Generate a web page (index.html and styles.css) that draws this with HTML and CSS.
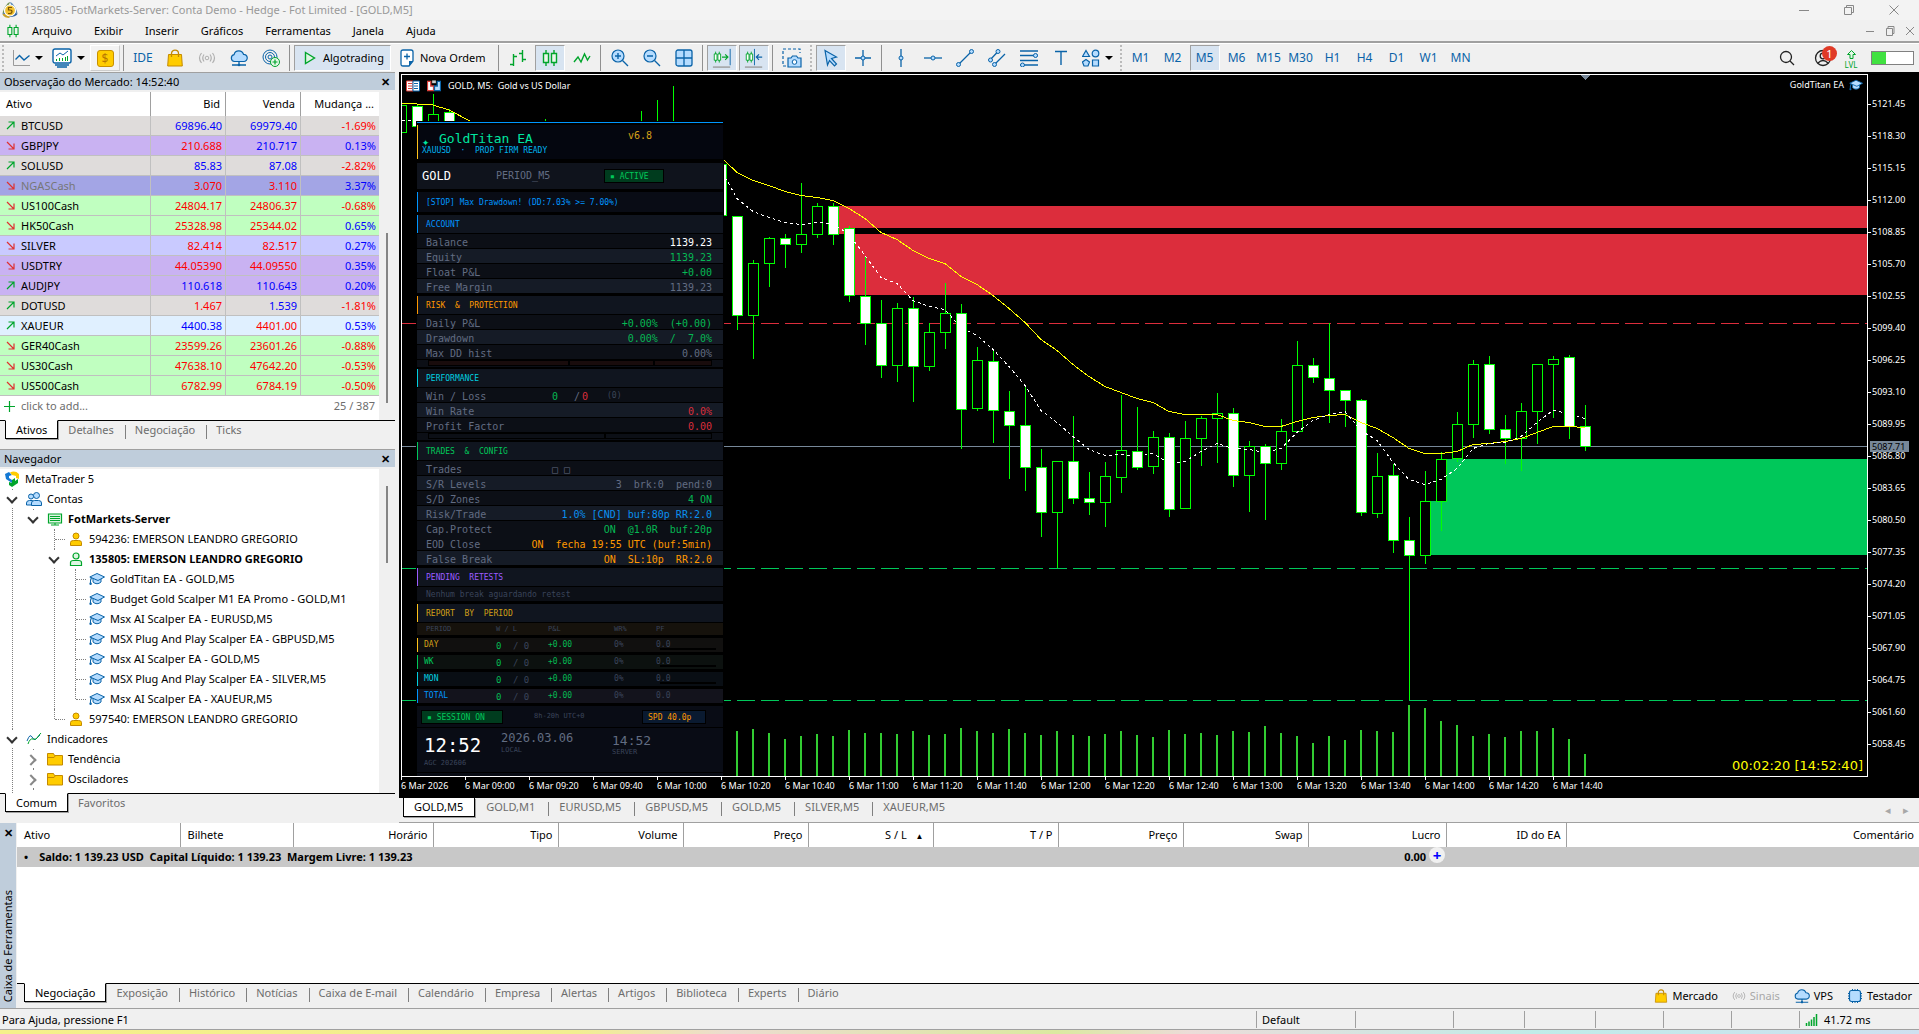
FILE: index.html
```html
<!DOCTYPE html>
<html lang="pt-BR">

<head>
    <meta charset="UTF-8">
    <meta name="viewport" content="width=device-width, initial-scale=1.0">
    <title>135805 - FotMarkets-Server</title>
    <link rel="stylesheet" href="styles.css">
</head>

<body>
    <svg class="sprite" aria-hidden="true">
        <symbol id="i-mt5" viewBox="0 0 18 18">
            <path d="M9 1C6 2 2 8 1.500 13l4-3z" fill="#6d8f55" />
            <path d="M9 1c3 1 7 7 7.500 12l-4-3z" fill="#5d8bb5" />
            <path d="M1.500 13c2 4 13 4 15 0l-3-2H4.500z" fill="#2d5f9c" />
            <path d="M1.500 13c1 3 4 4 7 4V13z" fill="#c9a227" />
            <circle cx="9" cy="9.500" r="5.500" fill="#f2c230" stroke="#fff" stroke-width="1.200" />
            <path d="M11 6.500H7.500v2.500h1.500q2 0 2 1.700T9 12.500H7" fill="none" stroke="#7a5200" stroke-width="1.200" />
        </symbol>
        <symbol id="i-candles" viewBox="0 0 18 18">
            <path d="M5 1v16M13 1v16" stroke="#00a52b" stroke-width="1.400" />
            <path d="M2.500 4.500h5v9h-5zM10.500 4.500h5v9h-5z" fill="#eaf6ec" stroke="#00a52b" stroke-width="1.400" />
        </symbol>
        <symbol id="i-line" viewBox="0 0 18 18">
            <path d="M1.500 1v15.500H18" fill="none" stroke="#9a9a9a" />
            <path d="M3.500 10.500l4-4 4.500 4.500 5.500-4.500" fill="none" stroke="#0a63a8" stroke-width="1.400" />
        </symbol>
        <symbol id="i-indic" viewBox="0 0 20 20">
            <rect x="1" y="1" width="18" height="14" rx="2" fill="#fff" stroke="#0a63a8" stroke-width="1.400" />
            <path d="M4 8l4-3 3 2 5-4" fill="none" stroke="#0a63a8" />
            <path d="M4.500 13v-2M7.500 13v-3M10.500 13v-3M13.500 13v-4M15.500 13V8" stroke="#00a52b" />
            <path d="M3 17h14M5 19h10" stroke="#0a63a8" stroke-width="1.400" />
        </symbol>
        <symbol id="i-bag" viewBox="0 0 16 18">
            <path d="M1.500 5.500h13l.8 11.500H.7z" fill="#fc0" stroke="#c48a00" />
            <path d="M4.500 8V4.500c0-4.500 7-4.500 7 0V8" fill="none" stroke="#c48a00" stroke-width="1.300" />
        </symbol>
        <symbol id="i-signal" viewBox="0 0 18 18">
            <circle cx="9" cy="9" r="1.800" fill="none" stroke="#b0b0b0" />
            <path d="M6 5.500q-2.500 3.500 0 7M12 5.500q2.500 3.500 0 7M3.500 4q-4 5 0 10M14.500 4q4 5 0 10" fill="none" stroke="#b0b0b0" stroke-width="1.200" />
        </symbol>
        <symbol id="i-cloud" viewBox="0 0 18 18">
            <path d="M4.500 12.500a3.500 3.500 0 0 1-.4-6.900 4.900 4.900 0 0 1 9.400-.3 3.600 3.600 0 0 1 .3 7.200z" fill="#b5dcff" stroke="#0a63a8" stroke-width="1.200" />
            <path d="M9 12.500V16M2 16h14" stroke="#0a63a8" stroke-width="1.300" />
            <circle cx="9" cy="16" r="1.300" fill="#0a63a8" />
        </symbol>
        <symbol id="i-radar" viewBox="0 0 18 18">
            <circle cx="8" cy="8" r="7" fill="none" stroke="#0a63a8" />
            <circle cx="8" cy="8" r="4.500" fill="none" stroke="#0a63a8" />
            <circle cx="8" cy="8" r="2" fill="none" stroke="#0a63a8" />
            <circle cx="13" cy="13" r="4.500" fill="#e6f7e8" stroke="#00a52b" />
            <path d="M13 10.500v5M10.500 13h5" stroke="#00a52b" stroke-width="1.200" />
        </symbol>
        <symbol id="i-play" viewBox="0 0 12 14">
            <path d="M1.500 1.500l9 5.500-9 5.500z" fill="#dff5e3" stroke="#00a52b" stroke-width="1.400" />
        </symbol>
        <symbol id="i-order" viewBox="0 0 14 18">
            <path d="M3 1h8q2 0 2 2v9l-4 5H3q-2 0-2-2V3q0-2 2-2z" fill="#fff" stroke="#0a63a8" stroke-width="1.300" />
            <path d="M13 12H9v5z" fill="#0a63a8" />
            <path d="M7 4.500v6M4 7.500h6" stroke="#0a63a8" stroke-width="1.300" />
        </symbol>
        <symbol id="i-bars" viewBox="0 0 18 18">
            <path d="M4.500 5v12M1 15.500h3.500M4.500 7.500H8M13.500 1v12M10 4.500h3.500M13.500 10.500H17" fill="none" stroke="#00a52b" stroke-width="1.400" />
        </symbol>
        <symbol id="i-zig" viewBox="0 0 18 18">
            <path d="M1 13l4-5 3 5 3.500-8 3 6L17 7" fill="none" stroke="#00a52b" stroke-width="1.400" />
        </symbol>
        <symbol id="i-zoomin" viewBox="0 0 18 18">
            <circle cx="7" cy="7" r="6" fill="#b5dcff" stroke="#0a63a8" stroke-width="1.200" />
            <path d="M11.500 11.500L17 17M4 7h6M7 4v6" stroke="#0a63a8" stroke-width="1.400" />
        </symbol>
        <symbol id="i-zoomout" viewBox="0 0 18 18">
            <circle cx="7" cy="7" r="6" fill="#b5dcff" stroke="#0a63a8" stroke-width="1.200" />
            <path d="M11.500 11.500L17 17M4 7h6" stroke="#0a63a8" stroke-width="1.400" />
        </symbol>
        <symbol id="i-grid" viewBox="0 0 18 18">
            <rect x="1" y="1" width="16" height="16" rx="2" fill="#b5dcff" stroke="#0a63a8" stroke-width="1.300" />
            <path d="M9 1v16M1 9h16" stroke="#0a63a8" stroke-width="1.300" />
        </symbol>
        <symbol id="i-scroll" viewBox="0 0 20 22">
            <path d="M3 4v12M7 4v12" stroke="#00a52b" />
            <path d="M1.500 6.500h3v7h-3zM5.500 6.500h3v7h-3z" fill="#fff" stroke="#00a52b" />
            <path d="M10 10h6M13.500 7l3 3-3 3" fill="none" stroke="#00a52b" stroke-width="1.300" />
            <path d="M19 1v18" stroke="#0a63a8" />
            <path d="M0 21h19" stroke="#9a9a9a" stroke-width="1.500" />
        </symbol>
        <symbol id="i-shift" viewBox="0 0 20 22">
            <path d="M3 4v12M7 4v12" stroke="#00a52b" />
            <path d="M1.500 6.500h3v7h-3zM5.500 6.500h3v7h-3z" fill="#fff" stroke="#00a52b" />
            <path d="M19 10h-6M15.500 7l-3 3 3 3" fill="none" stroke="#0a63a8" stroke-width="1.300" />
            <path d="M10.500 1v18" stroke="#0a63a8" />
            <path d="M0 21h19" stroke="#9a9a9a" stroke-width="1.500" />
        </symbol>
        <symbol id="i-camera" viewBox="0 0 20 20">
            <path d="M4 18H1V1h17v4" fill="none" stroke="#0a63a8" stroke-width="1.200" stroke-dasharray="3 2" />
            <path d="M6 10h3l1.500-2h4L16 10h3v9H6z" fill="#b5dcff" stroke="#0a63a8" stroke-width="1.200" />
            <circle cx="12.500" cy="14" r="2.300" fill="#fff" stroke="#0a63a8" />
        </symbol>
        <symbol id="i-cursor" viewBox="0 0 18 18">
            <path d="M3 1.500l11.500 6.500-5 1.500 5 5.500-2 2-5-5.500L5.500 16z" fill="#b5dcff" stroke="#0a63a8" stroke-width="1.200" />
        </symbol>
        <symbol id="i-cross" viewBox="0 0 18 18">
            <path d="M9 1v16M1 9h16" stroke="#0a63a8" stroke-width="1.300" />
            <circle cx="9" cy="9" r="2" fill="#b5dcff" stroke="#0a63a8" />
        </symbol>
        <symbol id="i-vline" viewBox="0 0 18 18">
            <path d="M9 0v18" stroke="#0a63a8" stroke-width="1.300" />
            <circle cx="9" cy="9" r="2" fill="#b5dcff" stroke="#0a63a8" />
        </symbol>
        <symbol id="i-hline" viewBox="0 0 18 18">
            <path d="M0 9h18" stroke="#0a63a8" stroke-width="1.300" />
            <circle cx="9" cy="9" r="2" fill="#b5dcff" stroke="#0a63a8" />
        </symbol>
        <symbol id="i-trend" viewBox="0 0 18 18">
            <path d="M3 15L15 3" stroke="#0a63a8" stroke-width="1.300" />
            <circle cx="2.500" cy="15.500" r="2" fill="#b5dcff" stroke="#0a63a8" />
            <circle cx="15.500" cy="2.500" r="2" fill="#b5dcff" stroke="#0a63a8" />
        </symbol>
        <symbol id="i-channel" viewBox="0 0 18 18">
            <path d="M2 11l8-8.500M6 16L17 5" stroke="#0a63a8" stroke-width="1.300" />
            <circle cx="2.500" cy="11" r="2" fill="#b5dcff" stroke="#0a63a8" />
            <circle cx="10" cy="2.500" r="2" fill="#b5dcff" stroke="#0a63a8" />
            <circle cx="6.500" cy="15.500" r="2" fill="#b5dcff" stroke="#0a63a8" />
        </symbol>
        <symbol id="i-fibo" viewBox="0 0 18 18">
            <path d="M0 2h18M0 6.500h18M0 11.500h18M0 16h18" stroke="#0a63a8" stroke-width="1.300" />
            <circle cx="15.500" cy="6.500" r="2" fill="#b5dcff" stroke="#0a63a8" />
            <circle cx="2.500" cy="16" r="2" fill="#b5dcff" stroke="#0a63a8" />
        </symbol>
        <symbol id="i-text" viewBox="0 0 18 18">
            <path d="M3 2.500h12M9 2.500V16" stroke="#0a63a8" stroke-width="1.400" />
        </symbol>
        <symbol id="i-shapes" viewBox="0 0 18 18">
            <g fill="#b5dcff" stroke="#0a63a8" stroke-width="1.200">
                <path d="M4 1.500l3.500 6h-7z" />
                <circle cx="13.500" cy="4.500" r="3.300" />
                <path d="M4 10.500l3.500 2.500-1.500 4H2l-1.500-4z" />
                <path d="M10.500 11h6v6h-6z" />
            </g>
        </symbol>
        <symbol id="i-search" viewBox="0 0 18 18">
            <circle cx="8" cy="8" r="5.500" fill="none" stroke="#222" stroke-width="1.300" />
            <path d="M12 12l4 4" stroke="#222" stroke-width="1.300" />
        </symbol>
        <symbol id="i-user" viewBox="0 0 18 18">
            <circle cx="9" cy="9" r="7.500" fill="none" stroke="#222" stroke-width="1.300" />
            <circle cx="9" cy="7" r="2.800" fill="none" stroke="#222" stroke-width="1.300" />
            <path d="M4 14q5-5 10 0" fill="none" stroke="#222" stroke-width="1.300" />
        </symbol>
        <symbol id="i-level" viewBox="0 0 11 10">
            <path d="M5.500 1l4 4H7v4H4V5H1.500z" fill="#e6f7e8" stroke="#00a52b" />
        </symbol>
        <symbol id="i-up" viewBox="0 0 9 9">
            <path d="M1 8l7-7M2.500 1H8v5.500" fill="none" stroke="#00a52b" stroke-width="1.200" />
        </symbol>
        <symbol id="i-down" viewBox="0 0 9 9">
            <path d="M1 1l7 7M8 2.500V8H2.500" fill="none" stroke="#e03030" stroke-width="1.200" />
        </symbol>
        <symbol id="i-plus" viewBox="0 0 11 11">
            <path d="M5.500 0v11M0 5.500h11" stroke="#00a52b" stroke-width="1.200" />
        </symbol>
        <symbol id="i-meta" viewBox="0 0 16 16">
            <path d="M1 3l4-2 3 3-3 1v2l3 2v3L2 8z" fill="#1479d4" />
            <path d="M6 1.500q5-2.500 9 1.500v5l-3-1V5L8 4z" fill="#fc0" />
            <path d="M8 9l3-2v3l3-2v4l-6 4-3-2v-3l3 1z" fill="#00a52b" />
        </symbol>
        <symbol id="i-users" viewBox="0 0 16 16">
            <g fill="#b5dcff" stroke="#0a63a8">
                <circle cx="5" cy="5.500" r="2.500" />
                <path d="M.5 14v-2q0-2.500 3-2.500h3V14z" />
                <circle cx="10.500" cy="4.500" r="3" />
                <path d="M5.500 14.500V12q0-2.500 3-2.500h4q3 0 3 2.500v2.500z" />
            </g>
        </symbol>
        <symbol id="i-server" viewBox="0 0 16 16">
            <path d="M1.500 3h13v9h-13z" fill="#dff5e3" stroke="#00a52b" stroke-width="1.200" />
            <path d="M3 5.500h10M3 7.500h10M3 9.500h10M8 12v2M4 14h8" stroke="#00a52b" />
        </symbol>
        <symbol id="i-account" viewBox="0 0 14 16">
            <g fill="#fc0" stroke="#c48a00">
                <circle cx="7" cy="5" r="3" />
                <path d="M1.500 14.500v-3q0-2 3-2h5q3 0 3 2v3z" />
            </g>
        </symbol>
        <symbol id="i-active" viewBox="0 0 14 16">
            <g fill="#dff5e3" stroke="#00a52b" stroke-width="1.200">
                <circle cx="7" cy="5" r="3" />
                <path d="M1.500 14.500v-3q0-2 3-2h5q3 0 3 2v3z" />
            </g>
        </symbol>
        <symbol id="i-expert" viewBox="0 0 16 14">
            <path d="M4 6v4q4 3.500 8 0V6" fill="#b5dcff" stroke="#0a63a8" />
            <path d="M.8 5L8 1.500 15.500 5 9 8.500z" fill="#b5dcff" stroke="#0a63a8" />
            <path d="M2.500 5.500q-1.500 3-1 6" fill="none" stroke="#0a63a8" stroke-width="1.200" />
            <circle cx="1.600" cy="11.800" r="1.200" fill="#0a63a8" />
        </symbol>
        <symbol id="i-waves" viewBox="0 0 16 16">
            <path d="M1 10q3-8 5-4t4 2 4-4" fill="none" stroke="#0a63a8" />
            <path d="M2 13q2-6 5-5t4-1 4-5" fill="none" stroke="#00a52b" />
        </symbol>
        <symbol id="i-folder" viewBox="0 0 16 14">
            <path d="M.5 1.500h6l1 2h8V13H.5z" fill="#fc0" stroke="#c48a00" />
            <path d="M1 5.500h6l1.500-2" fill="none" stroke="#c48a00" />
        </symbol>
        <symbol id="i-chip" viewBox="0 0 16 16">
            <path d="M5.500 1v14M8 1v14M10.500 1v14M1 5.500h14M1 8h14M1 10.500h14" stroke="#0a63a8" />
            <rect x="2.500" y="2.500" width="11" height="11" rx="2" fill="#b5dcff" stroke="#0a63a8" stroke-width="1.200" />
        </symbol>
        <symbol id="i-net" viewBox="0 0 14 12">
            <path d="M1.500 12V9M4 12V7.500M6.500 12V5.500M9 12V3M11.500 12V0" stroke="#00a52b" stroke-width="1.500" />
        </symbol>
        <symbol id="i-book" viewBox="0 0 14 12">
            <path d="M.5 1h6.500v10H.5z" fill="#fff" stroke="#d9403a" />
            <path d="M7 1h6.500v10H7z" fill="#fff" stroke="#0a63a8" />
            <path d="M2 3.500h4M2 6h4M2 8.500h4" stroke="#d9403a" />
            <path d="M8 3.500h4M8 6h4M8 8.500h4" stroke="#0a63a8" />
        </symbol>
        <symbol id="i-trade" viewBox="0 0 15 12">
            <path d="M.5 1H4v5h3v5H.5z" fill="#fff" stroke="#d9403a" stroke-width="1.400" />
            <path d="M14.500 1H11v5H8v5h6.500z" fill="#b5dcff" stroke="#0a63a8" stroke-width="1.400" />
            <path d="M5.500 0h4v3h-4z" fill="#ccc" />
        </symbol>
    </svg>

    <header class="titlebar">
        <svg class="i18"><use href="#i-mt5" /></svg>
        <h1>135805 - FotMarkets-Server: Conta Demo - Hedge - Fot Limited - [GOLD,M5]</h1>
        <div class="window-buttons">
            <button aria-label="Minimizar"><svg viewBox="0 0 10 10"><path d="M0 5.500h10" /></svg></button>
            <button aria-label="Restaurar"><svg viewBox="0 0 10 10"><path d="M.5 2.500h7v7h-7zM2.500 2V.5h7v7H8" /></svg></button>
            <button aria-label="Fechar"><svg viewBox="0 0 10 10"><path d="M.5.500l9 9M9.500.5l-9 9" /></svg></button>
        </div>
    </header>

    <nav class="menubar">
        <svg class="i14"><use href="#i-candles" /></svg>
        <button>Arquivo</button>
        <button>Exibir</button>
        <button>Inserir</button>
        <button>Gráficos</button>
        <button>Ferramentas</button>
        <button>Janela</button>
        <button>Ajuda</button>
        <div class="window-buttons small">
            <button aria-label="Minimizar gráfico"><svg viewBox="0 0 10 10"><path d="M1 5.500h8" /></svg></button>
            <button aria-label="Restaurar gráfico"><svg viewBox="0 0 10 10"><path d="M1.500 2.500h6v7h-6zM3 2V.5h6v7H8" /></svg></button>
            <button aria-label="Fechar gráfico"><svg viewBox="0 0 10 10"><path d="M1 1l8 8M9 1L1 9" /></svg></button>
        </div>
    </nav>

    <div class="toolbar">
        <i class="grip"></i>
        <button class="tool drop" aria-label="Novo gráfico"><svg class="i18"><use href="#i-line" /></svg></button>
        <button class="tool drop" aria-label="Indicadores"><svg class="i20"><use href="#i-indic" /></svg></button>
        <button class="tool raised"><span class="dollar">$</span></button>
        <i class="sep"></i>
        <button class="tool word">IDE</button>
        <button class="tool" aria-label="Mercado"><svg class="i18"><use href="#i-bag" /></svg></button>
        <button class="tool" aria-label="Sinais"><svg class="i18"><use href="#i-signal" /></svg></button>
        <button class="tool" aria-label="VPS"><svg class="i18"><use href="#i-cloud" /></svg></button>
        <button class="tool" aria-label="Rede"><svg class="i18"><use href="#i-radar" /></svg></button>
        <i class="sep"></i>
        <button class="tool wide on"><svg class="i14"><use href="#i-play" /></svg>Algotrading</button>
        <button class="tool wide order"><svg class="i18"><use href="#i-order" /></svg>Nova Ordem</button>
        <i class="sep"></i>
        <button class="tool" aria-label="Barras"><svg class="i18"><use href="#i-bars" /></svg></button>
        <button class="tool on" aria-label="Candles"><svg class="i18"><use href="#i-candles" /></svg></button>
        <button class="tool" aria-label="Linha"><svg class="i18"><use href="#i-zig" /></svg></button>
        <i class="sep"></i>
        <button class="tool" aria-label="Ampliar"><svg class="i18"><use href="#i-zoomin" /></svg></button>
        <button class="tool" aria-label="Reduzir"><svg class="i18"><use href="#i-zoomout" /></svg></button>
        <button class="tool" aria-label="Lado a lado"><svg class="i18"><use href="#i-grid" /></svg></button>
        <i class="sep"></i>
        <button class="tool on" aria-label="Rolagem automática"><svg class="i20"><use href="#i-scroll" /></svg></button>
        <button class="tool on" aria-label="Deslocamento"><svg class="i20"><use href="#i-shift" /></svg></button>
        <i class="sep"></i>
        <button class="tool" aria-label="Captura"><svg class="i20"><use href="#i-camera" /></svg></button>
        <i class="grip"></i>
        <button class="tool on" aria-label="Cursor"><svg class="i18"><use href="#i-cursor" /></svg></button>
        <button class="tool" aria-label="Mira"><svg class="i18"><use href="#i-cross" /></svg></button>
        <i class="sep"></i>
        <button class="tool" aria-label="Linha vertical"><svg class="i18"><use href="#i-vline" /></svg></button>
        <button class="tool" aria-label="Linha horizontal"><svg class="i18"><use href="#i-hline" /></svg></button>
        <button class="tool" aria-label="Tendência"><svg class="i18"><use href="#i-trend" /></svg></button>
        <button class="tool" aria-label="Canal"><svg class="i18"><use href="#i-channel" /></svg></button>
        <button class="tool" aria-label="Fibonacci"><svg class="i18"><use href="#i-fibo" /></svg></button>
        <button class="tool" aria-label="Texto"><svg class="i18"><use href="#i-text" /></svg></button>
        <button class="tool drop" aria-label="Objetos"><svg class="i18"><use href="#i-shapes" /></svg></button>
        <i class="grip"></i>
        <button class="tool word">M1</button>
        <button class="tool word">M2</button>
        <button class="tool word on">M5</button>
        <button class="tool word">M6</button>
        <button class="tool word">M15</button>
        <button class="tool word">M30</button>
        <button class="tool word">H1</button>
        <button class="tool word">H4</button>
        <button class="tool word">D1</button>
        <button class="tool word">W1</button>
        <button class="tool word">MN</button>
        <div class="toolbar-end">
            <button class="tool" aria-label="Pesquisar"><svg class="i18"><use href="#i-search" /></svg></button>
            <button class="tool user" aria-label="Perfil"><svg class="i18"><use href="#i-user" /></svg><span class="badge">1</span></button>
            <div class="level"><svg class="i11"><use href="#i-level" /></svg>LVL</div>
            <div class="battery"></div>
        </div>
    </div>

    <main class="workspace">
        <aside class="sidebar">
            <section class="dock">
                <div class="dock-title">
                    <h2>Observação do Mercado: 14:52:40</h2>
                    <button aria-label="Fechar">✕</button>
                </div>
                <div class="dock-body">
                    <table class="market">
                        <thead>
                            <tr><th>Ativo</th><th>Bid</th><th>Venda</th><th>Mudança ...</th></tr>
                        </thead>
                        <tbody id="market-rows"></tbody>
                    </table>
                    <div class="add-row">
                        <svg class="i11"><use href="#i-plus" /></svg>
                        <span>click to add...</span>
                        <span class="count">25 / 387</span>
                    </div>
                    <i class="scroll market-scroll"></i>
                </div>
                <div class="tabs">
                    <button class="tab active">Ativos</button>
                    <button class="tab">Detalhes</button>
                    <button class="tab">Negociação</button>
                    <button class="tab">Ticks</button>
                </div>
            </section>

            <section class="dock navigator">
                <div class="dock-title">
                    <h2>Navegador</h2>
                    <button aria-label="Fechar">✕</button>
                </div>
                <div class="dock-body">
                    <div class="node root"><svg class="i16"><use href="#i-meta" /></svg>MetaTrader 5</div>
                    <ul class="tree">
                        <li>
                            <div class="node open"><svg class="i16"><use href="#i-users" /></svg>Contas</div>
                            <ul>
                                <li>
                                    <div class="node open bold"><svg class="i16"><use href="#i-server" /></svg>FotMarkets-Server</div>
                                    <ul>
                                        <li><div class="node"><svg class="i16"><use href="#i-account" /></svg>594236: EMERSON LEANDRO GREGORIO</div></li>
                                        <li>
                                            <div class="node open bold"><svg class="i16"><use href="#i-active" /></svg>135805: EMERSON LEANDRO GREGORIO</div>
                                            <ul>
                                                <li><div class="node"><svg class="i16"><use href="#i-expert" /></svg>GoldTitan EA - GOLD,M5</div></li>
                                                <li><div class="node"><svg class="i16"><use href="#i-expert" /></svg>Budget Gold Scalper M1 EA Promo - GOLD,M1</div></li>
                                                <li><div class="node"><svg class="i16"><use href="#i-expert" /></svg>Msx AI Scalper EA - EURUSD,M5</div></li>
                                                <li><div class="node"><svg class="i16"><use href="#i-expert" /></svg>MSX Plug And Play Scalper EA - GBPUSD,M5</div></li>
                                                <li><div class="node"><svg class="i16"><use href="#i-expert" /></svg>Msx AI Scalper EA - GOLD,M5</div></li>
                                                <li><div class="node"><svg class="i16"><use href="#i-expert" /></svg>MSX Plug And Play Scalper EA - SILVER,M5</div></li>
                                                <li><div class="node"><svg class="i16"><use href="#i-expert" /></svg>Msx AI Scalper EA - XAUEUR,M5</div></li>
                                            </ul>
                                        </li>
                                        <li><div class="node"><svg class="i16"><use href="#i-account" /></svg>597540: EMERSON LEANDRO GREGORIO</div></li>
                                    </ul>
                                </li>
                            </ul>
                        </li>
                        <li>
                            <div class="node open"><svg class="i16"><use href="#i-waves" /></svg>Indicadores</div>
                            <ul>
                                <li><div class="node closed"><svg class="i16"><use href="#i-folder" /></svg>Tendência</div></li>
                                <li><div class="node closed"><svg class="i16"><use href="#i-folder" /></svg>Osciladores</div></li>
                                <li><div class="node closed"><svg class="i16"><use href="#i-folder" /></svg></div></li>
                            </ul>
                        </li>
                        <li></li>
                    </ul>
                    <i class="scroll nav-scroll"></i>
                </div>
                <div class="tabs">
                    <button class="tab active">Comum</button>
                    <button class="tab">Favoritos</button>
                </div>
            </section>
        </aside>

        <section class="chart-area">
            <div class="chart">
                <div class="plot">
                    <svg id="plot" class="plot-svg"></svg>
                    <div class="plot-title">
                        <svg class="i14"><use href="#i-book" /></svg>
                        <svg class="i14"><use href="#i-trade" /></svg>
                        <span>GOLD, M5:&nbsp; Gold vs US Dollar</span>
                    </div>
                    <div class="plot-ea">GoldTitan EA <svg class="i14"><use href="#i-expert" /></svg></div>
                    <div class="plot-timer">00:02:20 [14:52:40]</div>

                    <div class="ea">
                        <div class="ea-head c-gold">
                            <div class="ea-name"><span>✦</span><b>GoldTitan EA</b><em>v6.8</em></div>
                            <div class="ea-sub">XAUUSD&nbsp; ·&nbsp; PROP FIRM READY</div>
                        </div>
                        <div class="ea-symbol"><b>GOLD</b><span>PERIOD_M5</span><em class="pill">▪ ACTIVE</em></div>
                        <div class="ea-stop c-blue">[STOP] Max Drawdown! (DD:7.03% &gt;= 7.00%)</div>

                        <h3 class="c-blue">ACCOUNT</h3>
                        <div class="ea-row"><span>Balance</span><b class="white">1139.23</b></div>
                        <div class="ea-row alt"><span>Equity</span><b class="green">1139.23</b></div>
                        <div class="ea-row"><span>Float P&amp;L</span><b class="green">+0.00</b></div>
                        <div class="ea-row alt"><span>Free Margin</span><b>1139.23</b></div>

                        <h3 class="c-orange">RISK&nbsp; &amp;&nbsp; PROTECTION</h3>
                        <div class="ea-row"><span>Daily P&amp;L</span><b class="green">+0.00%&nbsp; (+0.00)</b></div>
                        <div class="ea-row alt"><span>Drawdown</span><b class="green">0.00%&nbsp; /&nbsp; 7.0%</b></div>
                        <div class="ea-row"><span>Max DD hist</span><b>0.00%</b></div>
                        <div class="ea-gauge red"><i></i><i></i><i></i></div>

                        <h3 class="c-cyan">PERFORMANCE</h3>
                        <div class="ea-row winloss"><span>Win / Loss</span><b class="green">0</b><i>/</i><b class="red">0</b><small>(0)</small></div>
                        <div class="ea-row alt"><span>Win Rate</span><b class="red">0.0%</b></div>
                        <div class="ea-row"><span>Profit Factor</span><b class="red">0.00</b></div>
                        <div class="ea-gauge"><i></i><i></i></div>

                        <h3 class="c-green">TRADES&nbsp; &amp;&nbsp; CONFIG</h3>
                        <div class="ea-row slots"><span>Trades</span><b>□ □</b></div>
                        <div class="ea-row alt"><span>S/R Levels</span><b>3&nbsp; brk:0&nbsp; pend:0</b></div>
                        <div class="ea-row"><span>S/D Zones</span><b class="green">4 ON</b></div>
                        <div class="ea-row alt"><span>Risk/Trade</span><b class="blue">1.0% [CND] buf:80p RR:2.0</b></div>
                        <div class="ea-row open-end"><span>Cap.Protect</span><b class="green">ON&nbsp; @1.0R&nbsp; buf:20p</b></div>
                        <div class="ea-row"><span>EOD Close</span><b class="orange">ON&nbsp; fecha 19:55 UTC (buf:5min)</b></div>
                        <div class="ea-row alt"><span>False Break</span><b class="orange">ON&nbsp; SL:10p&nbsp; RR:2.0</b></div>

                        <h3 class="c-purple">PENDING&nbsp; RETESTS</h3>
                        <div class="ea-row note">Nenhum break aguardando retest</div>

                        <h3 class="c-gold">REPORT&nbsp; BY&nbsp; PERIOD</h3>
                        <div class="ea-cols"><span>PERIOD</span><span>W / L</span><span>P&amp;L</span><span>WR%</span><span>PF</span></div>
                        <div class="ea-period c-gold"><span>DAY</span><b>0</b><i>/ 0</i><b>+0.00</b><span>0%</span><span class="pf">0.0</span></div>
                        <div class="ea-period c-green"><span>WK</span><b>0</b><i>/ 0</i><b>+0.00</b><span>0%</span><span class="pf">0.0</span></div>
                        <div class="ea-period c-cyan"><span>MON</span><b>0</b><i>/ 0</i><b>+0.00</b><span>0%</span><span class="pf">0.0</span></div>
                        <div class="ea-period c-blue"><span>TOTAL</span><b>0</b><i>/ 0</i><b>+0.00</b><span>0%</span><span>0.0</span></div>

                        <div class="ea-session"><em class="pill">▪ SESSION ON</em><span>8h-20h UTC+0</span><em class="pill spread">SPD 40.0p</em></div>
                        <div class="ea-clock">
                            <div><strong>12:52</strong><small>AGC 202606</small></div>
                            <div><span>2026.03.06</span><small>LOCAL</small></div>
                            <div><span class="server">14:52</span><small>SERVER</small></div>
                        </div>
                        <div class="ea-foot"></div>
                    </div>
                </div>
                <div class="prices" id="prices"></div>
                <div class="times" id="times"></div>
            </div>
            <div class="tabs chart-tabs">
                <button class="tab active">GOLD,M5</button>
                <button class="tab">GOLD,M1</button>
                <button class="tab">EURUSD,M5</button>
                <button class="tab">GBPUSD,M5</button>
                <button class="tab">GOLD,M5</button>
                <button class="tab">SILVER,M5</button>
                <button class="tab">XAUEUR,M5</button>
                <div class="pager"><button aria-label="Anterior">◂</button><button aria-label="Próximo">▸</button></div>
            </div>
        </section>
    </main>

    <section class="toolbox">
        <div class="toolbox-side">
            <button aria-label="Fechar">✕</button>
            <span>Caixa de Ferramentas</span>
        </div>
        <div class="toolbox-main">
            <div class="toolbox-body">
                <table class="trade">
                    <colgroup>
                        <col class="w163"><col class="w113"><col class="w140"><col class="w125"><col class="w125"><col class="w125"><col class="w125"><col class="w125"><col class="w125"><col class="w125"><col class="w138"><col class="w120"><col>
                    </colgroup>
                    <thead>
                        <tr>
                            <th class="left">Ativo</th><th class="left">Bilhete</th><th>Horário</th><th>Tipo</th><th>Volume</th><th>Preço</th><th>S / L <span class="sort">▲</span></th><th>T / P</th><th>Preço</th><th>Swap</th><th>Lucro</th><th>ID do EA</th><th>Comentário</th>
                        </tr>
                    </thead>
                    <tbody>
                        <tr>
                            <td colspan="10" class="left"><span class="dot">•</span>Saldo: 1 139.23 USD&nbsp; Capital Líquido: 1 139.23&nbsp; Margem Livre: 1 139.23</td>
                            <td class="profit">0.00 <button aria-label="Adicionar">+</button></td>
                            <td colspan="2"></td>
                        </tr>
                    </tbody>
                </table>
            </div>
            <div class="tabs">
                <button class="tab active">Negociação</button>
                <button class="tab">Exposição</button>
                <button class="tab">Histórico</button>
                <button class="tab">Notícias</button>
                <button class="tab">Caixa de E-mail</button>
                <button class="tab">Calendário</button>
                <button class="tab">Empresa</button>
                <button class="tab">Alertas</button>
                <button class="tab">Artigos</button>
                <button class="tab">Biblioteca</button>
                <button class="tab">Experts</button>
                <button class="tab">Diário</button>
                <div class="services">
                    <a href="#"><svg class="i14"><use href="#i-bag" /></svg>Mercado</a>
                    <a href="#" class="off"><svg class="i14"><use href="#i-signal" /></svg>Sinais</a>
                    <a href="#"><svg class="i16"><use href="#i-cloud" /></svg>VPS</a>
                    <a href="#"><svg class="i16"><use href="#i-chip" /></svg>Testador</a>
                </div>
            </div>
        </div>
    </section>

    <footer class="statusbar">
        <span class="help">Para Ajuda, pressione F1</span>
        <span class="cell profile">Default</span>
        <span class="cell w98"></span>
        <span class="cell w71"></span>
        <span class="cell w71"></span>
        <span class="cell w68"></span>
        <span class="cell w68"></span>
        <span class="cell w68"></span>
        <span class="cell ping"><svg class="i14"><use href="#i-net" /></svg>41.72 ms</span>
    </footer>
    <div class="desktop-strip"></div>

    <script src="chart.js"></script>
</body>

</html>
```
FILE: styles.css
```css
* {
    box-sizing: border-box;
}

body {
    margin: 0;
    min-height: 100vh;
    display: flex;
    flex-direction: column;
    background-color: #f0f0f0;
    color: #000;
    font-family: "Noto Sans", "Open Sans", sans-serif;
    font-size: 11px;
    line-height: 20px;
}

button {
    font: inherit;
    color: inherit;
    background: none;
    border: none;
    padding: 0;
    cursor: pointer;
}

h1,
h2,
h3 {
    margin: 0;
    font-size: inherit;
    font-weight: 400;
}

em,
i {
    font-style: normal;
}

svg {
    flex: none;
    display: block;
}

.sprite {
    display: none;
}

.i11 { width: 11px; height: 11px; }
.i14 { width: 14px; height: 14px; }
.i16 { width: 16px; height: 16px; }
.i18 { width: 18px; height: 18px; }
.i20 { width: 20px; height: 20px; }

/* title and menu */
.titlebar {
    display: flex;
    align-items: center;
    gap: 5px;
    height: 20px;
    padding-left: 1px;
    background-color: #f3f3f3;
    color: #999;
}

.window-buttons {
    display: flex;
    gap: 31px;
    margin-left: auto;
    padding-right: 18px;
}

.window-buttons button {
    width: 14px;
    height: 14px;
}

.window-buttons svg {
    width: 10px;
    height: 10px;
    margin: 0 auto;
    fill: none;
    stroke: #888;
}

.window-buttons.small {
    gap: 6px;
    padding-right: 2px;
}

.menubar {
    display: flex;
    align-items: center;
    gap: 22px;
    height: 23px;
    padding-left: 6px;
    border-bottom: 2px solid #a0a0a0;
}

.menubar > svg {
    margin-right: -10px;
}

/* toolbar */
.toolbar {
    display: flex;
    align-items: center;
    height: 29px;
    border-top: 1px solid #fff;
}

.tool {
    position: relative;
    display: flex;
    align-items: center;
    justify-content: center;
    flex: none;
    width: 30px;
    height: 26px;
    margin: 0 1px;
    border: 1px solid transparent;
}

.tool.on {
    background-color: #d8e4f1;
    border-color: #a0a0a0 #fff #fff #a0a0a0;
}

.tool.raised {
    background-color: #f3f3f3;
    border-color: #fff #ccc #ccc #fff;
}

.tool.word {
    color: #0a63a8;
    font-size: 12px;
}

.tool.drop {
    width: 39px;
    gap: 5px;
}

.tool.drop::after {
    content: "";
    border: 4px solid transparent;
    border-top-color: #000;
    border-bottom: 0;
}

.tool.wide {
    width: auto;
    padding: 0 6px 0 8px;
    gap: 6px;
}

.tool.order {
    padding: 0 8px 0 4px;
    gap: 4px;
}

.dollar {
    width: 17px;
    height: 17px;
    border: 1px solid #c89000;
    border-radius: 3px;
    background-color: #fc0;
    color: #b87800;
    font-size: 12px;
    line-height: 15px;
}

.grip {
    flex: none;
    width: 4px;
    height: 26px;
    margin: 0 1px 0 2px;
    border-left: 2px dotted #bbb;
}

.sep {
    flex: none;
    width: 4px;
    height: 26px;
    margin-left: 2px;
    border-left: 1px solid #909090;
}

.toolbar-end {
    display: flex;
    align-items: center;
    gap: 4px;
    margin-left: auto;
    padding-right: 5px;
}

.level {
    display: flex;
    flex-direction: column;
    align-items: center;
    width: 16px;
    margin-right: 8px;
    padding-top: 2px;
    font-size: 8px;
    line-height: 9px;
    color: #00a52b;
}

.badge {
    position: absolute;
    top: 0;
    right: 0;
    width: 15px;
    height: 15px;
    border-radius: 8px;
    background-color: #e03a26;
    color: #fff;
    line-height: 15px;
}

.battery {
    width: 43px;
    height: 14px;
    border: 1px solid #808080;
    background: linear-gradient(to right, #41e141 35%, #fff 35%);
}

/* workspace */
.workspace {
    flex: 1;
    display: flex;
    min-height: 750px;
}

.sidebar {
    flex: none;
    display: flex;
    flex-direction: column;
    width: 395px;
    margin-right: 4px;
}

.dock {
    display: flex;
    flex-direction: column;
    border-top: 1px solid #a0a0a0;
}

.dock + .dock {
    margin-top: 9px;
}

.dock-title {
    display: flex;
    justify-content: space-between;
    height: 17px;
    padding: 0 5px 0 4px;
    margin-bottom: 2px;
    line-height: 18px;
    background-color: #bfcddb;
}

.dock-title button {
    width: 10px;
    font-weight: 700;
}

.dock-body {
    position: relative;
    padding-right: 16px;
    background: linear-gradient(to left, #f0f0f0 16px, #fff 16px);
}

.scroll {
    position: absolute;
    right: 7px;
    width: 2px;
    background-color: #858585;
}

.market-scroll {
    top: 141px;
    height: 170px;
}

.nav-scroll {
    top: 17px;
    height: 77px;
}

.market {
    width: 100%;
    table-layout: fixed;
    border-collapse: separate;
    border-spacing: 0;
}

.market th {
    height: 24px;
    padding: 0 5px;
    text-align: right;
    font-weight: 400;
    border-right: 1px solid #a0a0a0;
}

.market th:first-child,
.market td:first-child {
    width: 151px;
    padding-left: 6px;
    text-align: left;
}

.market th:last-child,
.market td:last-child {
    width: 78px;
    border-right: none;
}

.market td {
    height: 20px;
    padding: 0 3px;
    line-height: 19px;
    text-align: right;
    border-right: 1px solid #c0c0c0;
    border-bottom: 1px solid #c0c0c0;
}

.market svg {
    display: inline-block;
    width: 9px;
    height: 9px;
    margin-right: 6px;
}

.up { color: #00f; }
.dn { color: #f00; }
.row-gray { background-color: #dfdcdb; }
.row-purple { background-color: #c9b2f2; }
.row-indigo { background-color: #a3a5e5; }
.row-indigo td:first-child { color: #777; }
.row-green { background-color: #c0ffc0; }
.row-silver { background-color: #c9caff; }
.row-sky { background-color: #e0f0ff; }

.add-row {
    display: flex;
    align-items: center;
    gap: 6px;
    height: 24px;
    padding: 0 4px 4px;
    color: #6d6d6d;
}

.count {
    margin-left: auto;
}

/* tabs */
.tabs {
    display: flex;
    height: 20px;
    padding-left: 5px;
    border-top: 1px solid #000;
    color: #6d6d6d;
}

.tab {
    position: relative;
    height: 18px;
    padding: 0 11px 0 10px;
    line-height: 18px;
}

.tab + .tab:not(:nth-child(2))::before {
    content: "";
    position: absolute;
    left: 0;
    top: 4px;
    height: 14px;
    border-left: 1px solid #808080;
}

.tab.active {
    height: 19px;
    margin-top: -1px;
    padding: 0 10px;
    background-color: #fff;
    color: #000;
    border: 1px solid #000;
    border-top-color: #fff;
    box-shadow: 1px 1px #a0a0a0;
}

/* navigator */
.navigator {
    flex: 1;
    min-height: 0;
    margin-bottom: 10px;
}

.navigator .dock-body {
    flex: 1 1 0;
    overflow: hidden;
}

.tree,
.tree ul {
    list-style: none;
    margin: 0;
    padding: 0;
}

.tree {
    padding-left: 2px;
}

.tree ul {
    padding-left: 21px;
}

.tree li {
    position: relative;
    min-height: 20px;
}

.tree li::before {
    content: "";
    position: absolute;
    left: 10px;
    top: 0;
    bottom: 0;
    border-left: 1px dotted #808080;
}

.tree li:last-child::before {
    bottom: auto;
    height: 10px;
}

.node {
    position: relative;
    display: flex;
    align-items: center;
    gap: 5px;
    height: 20px;
    padding-left: 24px;
    white-space: nowrap;
}

.node::before {
    content: "";
    position: absolute;
    left: 11px;
    width: 10px;
    top: 10px;
    border-top: 1px dotted #808080;
}

.node.root {
    padding-left: 4px;
}

.node.root::before {
    display: none;
}

.node.open::after,
.node.closed::after {
    content: "";
    position: absolute;
    left: 6px;
    top: 5px;
    width: 6px;
    height: 6px;
    border: solid #333;
    border-width: 0 2px 2px 0;
    transform: rotate(45deg);
}

.node.closed::after {
    left: 4px;
    top: 7px;
    border-color: #888;
    transform: rotate(-45deg);
}

.node.open::before,
.node.closed::before {
    left: 2px;
    top: 1px;
    width: 17px;
    height: 18px;
    border: none;
    background-color: #fff;
}

.bold {
    font-weight: 700;
}

/* chart */
.chart-area {
    flex: 1;
    display: flex;
    flex-direction: column;
    min-width: 0;
}

.chart {
    flex: 1;
    display: grid;
    grid-template-columns: 1fr 51px;
    grid-template-rows: 1fr 21px;
    padding: 2px 0 0 2px;
    background-color: #000;
    color: #fff;
    font-size: 9px;
}

.plot {
    position: relative;
    border: 1px solid #fff;
    overflow: hidden;
}

.plot-svg {
    position: absolute;
    width: 100%;
    height: 100%;
}

.plot-title {
    position: absolute;
    left: 4px;
    top: 2px;
    display: flex;
    align-items: center;
    gap: 7px;
    line-height: 18px;
}

.plot-ea {
    position: absolute;
    right: 4px;
    top: 2px;
    display: flex;
    align-items: center;
    gap: 5px;
    line-height: 16px;
}

.plot-timer {
    position: absolute;
    right: 4px;
    bottom: 2px;
    color: #ff0;
    font-family: "DejaVu Sans", sans-serif;
    font-size: 13px;
    line-height: 16px;
}

.prices {
    position: relative;
    padding-top: 14px;
}

.price {
    display: flex;
    align-items: center;
    gap: 1px;
    height: 32px;
}

.price::before {
    content: "";
    width: 3px;
    border-top: 1px solid #fff;
}

.price-now {
    position: absolute;
    left: 2px;
    top: 367px;
    width: 39px;
    height: 11px;
    padding-left: 2px;
    line-height: 11px;
    background-color: #778899;
    color: #000;
}

.times {
    grid-column: 1 / -1;
    display: flex;
    line-height: 16px;
}

.time {
    flex: none;
    width: 64px;
    padding-top: 1px;
    white-space: nowrap;
    background: linear-gradient(#fff, #fff) no-repeat 0 0 / 1px 3px;
}

.chart-tabs {
    height: 25px;
    padding-left: 4px;
    border-top: none;
    border-bottom: 1px solid #a0a0a0;
}

.chart-tabs .tab {
    padding: 0 13px 0 11px;
}

.chart-tabs .active {
    margin-top: 0;
    padding: 0 11px 0 10px;
    border-top: none;
}

.pager {
    display: flex;
    gap: 12px;
    margin-left: auto;
    padding-right: 10px;
    line-height: 16px;
    color: #a8a8a8;
}

/* expert panel drawn over the plot */
.ea {
    position: absolute;
    left: 14px;
    top: 46px;
    bottom: 0;
    width: 308px;
    padding: 1px;
    background-color: #000;
    color: #626c82;
    font-family: "DejaVu Sans Mono", monospace;
    font-size: 10px;
    line-height: 17px;
    white-space: nowrap;
}

.ea::before {
    content: "";
    display: block;
    height: 1px;
    margin-bottom: 2px;
    background-color: #0096ff;
}

.ea b {
    font-weight: 400;
}

.c-gold { color: #d4a017; border-left: 1px solid #ffc21a; }
.c-blue { color: #0096ff; border-left: 1px solid #0096ff; }
.c-orange { color: #ff9800; border-left: 1px solid #ff9800; }
.c-cyan { color: #00d0e0; border-left: 1px solid #00d0e0; }
.c-green { color: #00c85a; border-left: 1px solid #00c85a; }
.c-purple { color: #9c5cff; border-left: 1px solid #9c5cff; }
.ea .white { color: #fff; }
.ea .green { color: #05b853; }
.ea .red { color: #dc2d3c; }
.ea .blue { color: #0a90f0; }
.ea .orange { color: #ff9800; }

.ea-head {
    height: 34px;
    padding: 4px 0 0 4px;
    background-color: #04060f;
}

.ea-name {
    display: flex;
    gap: 9px;
    height: 18px;
    line-height: 18px;
    color: #00e6a0;
}

.ea-name span {
    width: 8px;
    font-size: 12px;
    line-height: 26px;
}

.ea-name b {
    font-size: 13px;
    line-height: 20px;
}

.ea-name em {
    margin-left: 86px;
    line-height: 14px;
    color: #d4a017;
}

.ea-sub {
    font-size: 8px;
    line-height: 8px;
    color: #00b4f0;
}

.ea-symbol {
    display: grid;
    grid-template-columns: 74px 108px 60px;
    align-items: center;
    height: 26px;
    margin-top: 4px;
    padding-left: 5px;
    line-height: 22px;
    background-color: #0f131c;
}

.ea-symbol b {
    font-size: 12px;
    color: #fff;
}

.pill {
    height: 14px;
    padding: 0 0 0 5px;
    line-height: 13px;
    font-size: 8px;
    border: 1px solid #000;
    background-color: #003c1e;
    color: #00c85a;
}

.ea-stop {
    height: 20px;
    margin: 3px 0;
    padding-left: 8px;
    line-height: 21px;
    font-size: 8px;
    background-color: #090c15;
}

.ea h3 {
    height: 18px;
    margin: 2px 0 1px;
    padding-left: 8px;
    line-height: 19px;
    font-size: 8px;
    background-color: #10151f;
}

.ea-row {
    display: flex;
    justify-content: space-between;
    height: 15px;
    padding: 0 11px 0 9px;
    background-color: #0c0f16;
    border-bottom: 1px solid #000;
}

.ea-row.alt {
    background-color: #151b26;
}

.ea-row.open-end {
    border-bottom: none;
}

.ea-row.note {
    font-size: 8px;
    line-height: 15px;
    color: #3a445a;
}

.winloss,
.slots {
    display: grid;
    grid-template-columns: 126px 22px 8px 25px 1fr;
}

.winloss small {
    font-size: 8px;
    line-height: 15px;
    color: #3c465a;
}

.ea-gauge {
    display: flex;
    height: 7px;
    padding: 0 11px 1px;
    background-color: #0c0f16;
}

.ea-gauge i {
    flex: 5;
    border: 1px solid #000;
}

.ea-gauge i + i {
    flex: 3;
}

.ea-gauge i + i + i {
    flex: 2;
}

.ea-gauge.red i {
    background-color: #190c0c;
}

.ea-cols {
    display: grid;
    grid-template-columns: 70px 52px 66px 42px 1fr;
    height: 12px;
    padding-left: 9px;
    line-height: 12px;
    font-size: 7px;
    color: #3a445a;
    background-color: #16120c;
}

.ea-period {
    display: grid;
    grid-template-columns: 72px 17px 35px 66px 42px 1fr;
    height: 14px;
    margin-top: 3px;
    padding-left: 6px;
    line-height: 14px;
    font-size: 8px;
    color: #3a445a;
    background-color: #11100f;
}

.ea-period.c-green { background-color: #0c110f; }
.ea-period.c-cyan { background-color: #090e14; }
.ea-period.c-blue { background-color: #13131c; }
.ea-period.c-gold span:first-child { color: #d4a017; }
.ea-period.c-green span:first-child { color: #00c85a; }
.ea-period.c-cyan span:first-child { color: #00d0e0; }
.ea-period.c-blue span:first-child { color: #0096ff; }

.ea-period b {
    color: #05b853;
}

.ea-period i,
.ea-period b:nth-child(2) {
    font-size: 9px;
    line-height: 16px;
}

.pf {
    margin-right: 7px;
    background: linear-gradient(#000, #000) no-repeat 4px 10px / 100% 2px;
}

.ea-session {
    display: grid;
    grid-template-columns: 82px 1fr 64px;
    align-items: center;
    height: 21px;
    margin-top: 3px;
    padding: 0 17px 0 4px;
    background-color: #090c15;
    font-size: 7px;
    color: #3a445a;
}

.ea-session span {
    padding-left: 31px;
}

.pill.spread {
    background-color: #0a1a30;
    color: #ff9800;
}

.ea-clock {
    display: grid;
    grid-template-columns: 77px 111px 1fr;
    height: 44px;
    margin-top: 1px;
    padding: 3px 0 0 7px;
    background-color: #090c15;
}

.ea-clock strong {
    display: block;
    height: 28px;
    line-height: 28px;
    font-size: 19px;
    font-weight: 400;
    color: #fff;
}

.ea-clock span {
    display: block;
    line-height: 15px;
    font-size: 12px;
}

.ea-clock .server {
    padding-top: 2px;
    font-size: 13px;
}

.ea-clock small {
    display: block;
    line-height: 8px;
    font-size: 7px;
    color: #3a445a;
}

.ea-foot {
    height: 4px;
    margin-top: 1px;
    background-color: #090c15;
}

/* toolbox */
.toolbox {
    display: flex;
    background-color: #f0f0f0;
    border-bottom: 1px solid #a0a0a0;
}

.toolbox-side {
    flex: none;
    display: flex;
    flex-direction: column;
    align-items: center;
    justify-content: space-between;
    width: 16px;
    padding-bottom: 6px;
    background-color: #bfcddb;
}

.toolbox-side button {
    font-weight: 700;
}

.toolbox-side span {
    writing-mode: vertical-rl;
    transform: rotate(180deg);
    line-height: 16px;
}

.toolbox-main {
    flex: 1;
    min-width: 0;
    padding-left: 1px;
}

.toolbox-body {
    height: 160px;
    background-color: #fff;
}

.trade {
    width: 100%;
    table-layout: fixed;
    border-collapse: collapse;
}

.trade th,
.trade td {
    height: 20px;
    padding: 0 5px;
    text-align: right;
}

.trade th {
    height: 24px;
    font-weight: 400;
    border-right: 1px solid #a0a0a0;
}

.trade th:last-child {
    border-right: none;
}

.trade td {
    background-color: #c8c8c8;
    font-weight: 700;
}

.trade .left {
    padding-left: 7px;
    text-align: left;
}

.trade .profit {
    padding-right: 1px;
}

.profit button {
    width: 16px;
    height: 16px;
    border-radius: 8px;
    background-color: #f0f0f0;
    color: #00f;
    font-size: 15px;
    line-height: 14px;
}

.dot {
    margin-right: 11px;
}

.sort {
    margin: 0 4px 0 6px;
    font-size: 8px;
}

.w163 { width: 163px; }
.w113 { width: 113px; }
.w120 { width: 120px; }
.w125 { width: 125px; }
.w138 { width: 138px; }
.w140 { width: 140px; }

.toolbox .tabs {
    height: 25px;
    padding-left: 7px;
}

.services {
    display: flex;
    gap: 14px;
    margin-left: auto;
    padding-right: 7px;
    line-height: 24px;
}

.services a {
    display: flex;
    align-items: center;
    gap: 4px;
    color: #000;
    text-decoration: none;
}

.services .off {
    color: #a8a8a8;
}

.statusbar {
    display: flex;
    height: 21px;
    padding-top: 2px;
    border-bottom: 1px solid #a0a0a0;
}

.help {
    flex: 1;
    padding-left: 2px;
    line-height: 18px;
}

.cell {
    height: 17px;
    padding-left: 5px;
    line-height: 18px;
    border-left: 1px solid #a0a0a0;
}

.profile { width: 99px; }
.w98 { width: 98px; }
.w71 { width: 71px; }
.w68 { width: 68px; }

.ping {
    display: flex;
    align-items: center;
    gap: 5px;
    width: 120px;
}

.desktop-strip {
    height: 4px;
    background: linear-gradient(to right, #f5f08a, #f2ee90 30%, #ecdcd0 38%, #dbe9a0 55%, #ecdcd8 62%, #c0ece8 80%, #cfe0f0);
}
```
FILE: chart.js
```js
const rows = [
    ['gray', 'up', 'BTCUSD', '69896.40', '69979.40', 'up', 'up', '-1.69%'],
    ['purple', 'down', 'GBPJPY', '210.688', '210.717', 'dn', 'up', '0.13%'],
    ['gray', 'up', 'SOLUSD', '85.83', '87.08', 'up', 'up', '-2.82%'],
    ['indigo', 'down', 'NGASCash', '3.070', '3.110', 'dn', 'dn', '3.37%'],
    ['green', 'down', 'US100Cash', '24804.17', '24806.37', 'dn', 'dn', '-0.68%'],
    ['green', 'down', 'HK50Cash', '25328.98', '25344.02', 'dn', 'dn', '0.65%'],
    ['silver', 'down', 'SILVER', '82.414', '82.517', 'dn', 'dn', '0.27%'],
    ['purple', 'down', 'USDTRY', '44.05390', '44.09550', 'dn', 'dn', '0.35%'],
    ['purple', 'up', 'AUDJPY', '110.618', '110.643', 'up', 'up', '0.20%'],
    ['gray', 'up', 'DOTUSD', '1.467', '1.539', 'dn', 'up', '-1.81%'],
    ['sky', 'up', 'XAUEUR', '4400.38', '4401.00', 'up', 'dn', '0.53%'],
    ['green', 'down', 'GER40Cash', '23599.26', '23601.26', 'dn', 'dn', '-0.88%'],
    ['green', 'down', 'US30Cash', '47638.10', '47642.20', 'dn', 'dn', '-0.53%'],
    ['green', 'down', 'US500Cash', '6782.99', '6784.19', 'dn', 'dn', '-0.50%']
];

document.getElementById('market-rows').innerHTML = rows.map(r =>
    `<tr class="row-${r[0]}"><td><svg><use href="#i-${r[1]}" /></svg>${r[2]}</td>` +
    `<td class="${r[5]}">${r[3]}</td><td class="${r[6]}">${r[4]}</td>` +
    `<td class="${r[7][0] === '-' ? 'dn' : 'up'}">${r[7]}</td></tr>`).join('');

// axis labels
let prices = '';
for (let i = 0; i <= 20; i++) {
    prices += `<div class="price">${(5121.45 - i * 3.15).toFixed(2)}</div>`;
}
document.getElementById('prices').innerHTML = prices + '<div class="price-now">5087.71</div>';

let times = '<div class="time">6 Mar 2026</div>';
for (let m = 540; m <= 880; m += 20) {
    const hh = String(Math.floor(m / 60)).padStart(2, '0');
    const mm = String(m % 60).padStart(2, '0');
    times += `<div class="time">6 Mar ${hh}:${mm}</div>`;
}
document.getElementById('times').innerHTML = times;

// candles: body top, body bottom, high, low, filled, volume top
const STEP = 16;
const START = 737;
const candles = [
    [216, 315, 216, 330, 1, 731], [263, 315, 260, 359, 0, 729], [238, 263, 237, 287, 0, 733], [238, 244, 234, 268, 1, 739],
    [234, 244, 183, 253, 0, 736], [206, 234, 203, 238, 0, 734], [206, 234, 203, 245, 1, 736], [228, 295, 226, 302, 1, 730],
    [296, 323, 257, 345, 1, 733], [323, 365, 300, 378, 1, 733], [308, 365, 303, 382, 0, 734], [308, 366, 297, 402, 1, 731],
    [332, 366, 323, 371, 0, 735], [313, 332, 283, 349, 0, 734], [313, 409, 304, 449, 1, 728], [360, 408, 347, 411, 0, 731],
    [361, 410, 349, 443, 1, 733], [411, 425, 391, 479, 1, 729], [425, 467, 385, 491, 1, 733], [467, 512, 449, 537, 1, 735],
    [461, 512, 461, 568, 0, 731], [461, 498, 416, 504, 1, 735], [498, 502, 472, 515, 1, 736], [476, 502, 462, 527, 0, 734],
    [450, 477, 395, 493, 0, 731], [451, 467, 407, 470, 1, 735], [437, 466, 431, 474, 0, 737], [437, 509, 433, 517, 1, 730],
    [438, 508, 421, 508, 0, 734], [418, 438, 416, 466, 0, 733], [413, 418, 393, 463, 0, 735], [413, 475, 408, 487, 1, 731],
    [446, 475, 441, 512, 0, 732], [446, 463, 444, 520, 1, 726], [431, 463, 419, 470, 0, 733], [365, 431, 341, 431, 0, 736],
    [365, 377, 358, 383, 1, 743], [378, 390, 323, 423, 1, 736], [390, 400, 390, 427, 1, 740], [400, 512, 399, 516, 1, 730],
    [476, 513, 453, 518, 0, 731], [475, 540, 464, 553, 1, 732], [540, 555, 517, 700, 1, 705], [501, 555, 471, 564, 0, 708],
    [459, 501, 452, 531, 0, 721], [424, 458, 412, 462, 0, 725], [364, 424, 360, 438, 0, 736], [364, 429, 356, 434, 1, 734],
    [429, 438, 415, 464, 1, 737], [411, 438, 403, 471, 0, 731], [364, 411, 364, 444, 0, 731], [359, 364, 356, 418, 0, 728],
    [357, 426, 355, 439, 1, 739], [426, 446, 405, 451, 1, 754]
];
const slow = [172, 180, 185, 191, 195, 197, 200, 208, 218, 232, 239, 250, 258, 263, 276, 284, 295, 308, 322, 339, 350, 364,
    376, 386, 392, 398, 402, 411, 414, 414, 414, 420, 422, 426, 426, 421, 417, 415, 414, 422, 428, 437, 448, 453, 453, 451,
    444, 443, 441, 438, 432, 426, 426, 427];
const fast = [198, 211, 217, 222, 224, 222, 223, 234, 255, 277, 283, 300, 306, 309, 327, 335, 349, 366, 385, 410, 422, 436,
    449, 455, 454, 456, 453, 463, 461, 451, 443, 448, 449, 452, 448, 432, 420, 414, 411, 430, 440, 462, 479, 484, 479, 468,
    448, 443, 442, 436, 422, 410, 413, 418];

function candle(x, top, bottom, high, low, filled) {
    return `<path d="M${x + 0.5} ${high}V${low}" stroke="#0f0" />` +
        `<rect x="${x - 4.5}" y="${top + 0.5}" width="10" height="${bottom - top}" fill="${filled ? '#fff' : '#000'}" stroke="#0f0" />`;
}

function level(y, color, dash) {
    return `<line x1="401" x2="200%" y1="${y + 0.5}" y2="${y + 0.5}" stroke="${color}" stroke-dasharray="${dash}" />`;
}

function curve(values, before) {
    return before + values.map((y, i) => ` ${START + i * STEP},${y + 0.5}`).join('');
}

let out = '<g transform="translate(-402 -75)" shape-rendering="crispEdges">';
out += '<rect x="839" y="206" width="200%" height="22" fill="#dc2d3c" /><rect x="839" y="228" width="5" height="6" fill="#dc2d3c" />';
out += '<rect x="850" y="234" width="200%" height="61" fill="#dc2d3c" />';
out += '<rect x="1447" y="459" width="200%" height="96" fill="#00c85a" /><rect x="1431" y="501" width="20" height="54" fill="#00c85a" />';
out += level(446, '#778899', 'none') + level(323, '#dc2d3c', '18 6') + level(568, '#00c85a', '18 6') + level(700, '#00c85a', '18 6');
out += candle(401, 105, 132, 105, 132, 0) + candle(417, 106, 126, 105, 126, 1) + candle(433, 114, 130, 94, 130, 0);
out += candle(449, 112, 130, 109, 130, 1) + candle(721, 164, 215, 164, 215, 1);
out += '<path d="M545.500 119v8M641.500 111v12M657.500 100v22M673.500 86v36" stroke="#0f0" />';
candles.forEach((c, i) => {
    const x = START + i * STEP;
    out += candle(x, ...c);
    out += `<rect x="${x - 1}" y="${c[5]}" width="2" height="${777 - c[5]}" fill="#32cd32" />`;
});
out += '<polyline points="402,103 417,104 433,105 449,110 470,121" fill="none" stroke="#ff0" />';
out += '<path d="M402 120.500h14" stroke="#fff" stroke-dasharray="3 3" />';
out += `<polyline points="${curve(slow, '724,160')}" fill="none" stroke="#ff0" />`;
out += `<polyline points="${curve(fast, '725,177')}" fill="none" stroke="#fff" stroke-dasharray="3 3" />`;
out += '<path d="M1580 75h11l-5.500 5z" fill="#778899" />';
out += '</g>';
document.getElementById('plot').innerHTML = out;
```
